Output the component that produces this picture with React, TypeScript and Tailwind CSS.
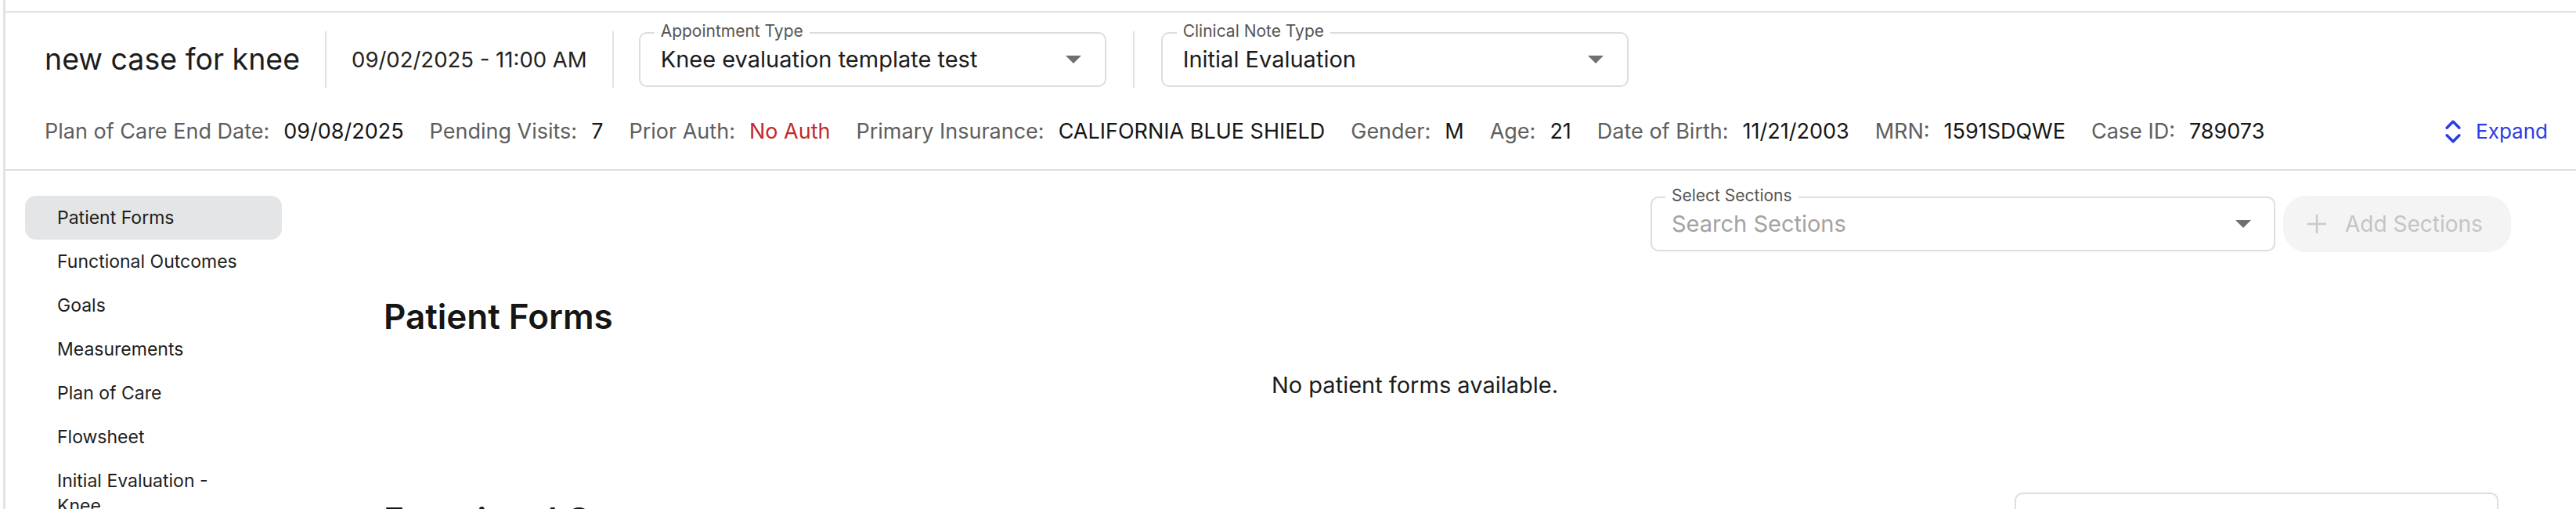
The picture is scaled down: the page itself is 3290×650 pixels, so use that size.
import React from "react";
import { ChevronsUpDown, Plus } from "lucide-react";

function Triangle() {
  return (
    <svg width="20" height="10" viewBox="0 0 20 10" className="shrink-0">
      <path d="M0 0 L20 0 L10 10 Z" fill="#6f6f6f" />
    </svg>
  );
}

function Divider() {
  return <div className="w-[2px] h-[72px] bg-[#e2e2e2] shrink-0" />;
}

function Info({ label, value, red }: { label: string; value: string; red?: boolean }) {
  return (
    <div className="flex items-center whitespace-nowrap">
      <span className="text-[#5e5e5e]">{label}</span>
      <span className={red ? "ml-[18px] text-[#c62828]" : "ml-[18px] text-[#161616]"}>{value}</span>
    </div>
  );
}

const sections = [
  "Patient Forms",
  "Functional Outcomes",
  "Goals",
  "Measurements",
  "Plan of Care",
  "Flowsheet",
  "Initial Evaluation - Knee",
];

export default function App() {
  return (
    <div className="w-[3290px] h-[650px] overflow-hidden bg-white font-['Inter',sans-serif] text-[#1a1a1a]">
      <div className="ml-[4px] h-full border-l-[3px] border-[#e3e3e3] pt-[14px]">
        <div className="border-t-2 border-[#e0e0e0]">
          {/* Header */}
          <header className="border-b-2 border-[#e0e0e0] pt-[24px] pb-[30px] pl-[50px] pr-[36px]">
            <div className="flex items-center h-[72px] gap-[32px]">
              <div className="text-[37.5px] leading-[44px] text-[#1c1c1c] whitespace-nowrap">new case for knee</div>
              <Divider />
              <div className="text-[27.5px] leading-[32px] text-[#222] whitespace-nowrap">09/02/2025 - 11:00 AM</div>
              <Divider />
              <div className="relative h-[70px] w-[597px] rounded-[10px] border-2 border-[#dddddd] flex items-center pl-[26px] pr-[30px]">
                <span className="absolute -top-[15px] left-[18px] bg-white px-[8px] text-[21px] leading-[24px] text-[#555] whitespace-nowrap">
                  Appointment Type
                </span>
                <span className="flex-1 text-[29px] leading-[36px] text-[#1c1c1c] whitespace-nowrap">Knee evaluation template test</span>
                <Triangle />
              </div>
              <div className="ml-[2px] mr-[2px]">
                <Divider />
              </div>
              <div className="relative h-[70px] w-[597px] rounded-[10px] border-2 border-[#dddddd] flex items-center pl-[26px] pr-[30px]">
                <span className="absolute -top-[15px] left-[18px] bg-white px-[8px] text-[21px] leading-[24px] text-[#555] whitespace-nowrap">
                  Clinical Note Type
                </span>
                <span className="flex-1 text-[29px] leading-[36px] text-[#1c1c1c] whitespace-nowrap">Initial Evaluation</span>
                <Triangle />
              </div>
            </div>
            <div className="mt-[38px] h-[36px] flex items-center text-[27px] leading-[36px]">
              <div className="flex items-center gap-[33px]">
                <Info label="Plan of Care End Date:" value="09/08/2025" />
                <Info label="Pending Visits:" value="7" />
                <Info label="Prior Auth:" value="No Auth" red />
                <Info label="Primary Insurance:" value="CALIFORNIA BLUE SHIELD" />
                <Info label="Gender:" value="M" />
                <Info label="Age:" value="21" />
                <Info label="Date of Birth:" value="11/21/2003" />
                <Info label="MRN:" value="1591SDQWE" />
                <Info label="Case ID:" value="789073" />
              </div>
              <div className="ml-auto flex items-center gap-[10px] text-[#2b3be6] text-[26px]">
                <ChevronsUpDown size={38} strokeWidth={2.2} color="#2b3be6" />
                <span>Expand</span>
              </div>
            </div>
          </header>

          {/* Body */}
          <div className="flex">
            <nav className="pl-[25px] pt-[32px] shrink-0">
              <ul className="w-[328px]">
                {sections.map((s, i) => (
                  <li
                    key={s}
                    className={
                      i === 0
                        ? "rounded-[14px] bg-[#e3e5e6] pl-[41px] pr-[41px] py-[12px] text-[23px] leading-[32px] text-[#1e1e1e]"
                        : "rounded-[14px] pl-[41px] pr-[41px] py-[12px] text-[23px] leading-[32px] text-[#1e1e1e]"
                    }
                  >
                    {s}
                  </li>
                ))}
              </ul>
            </nav>

            <main className="ml-[130px] pt-[32px] flex-1 pr-[83px]">
              <div className="flex justify-end gap-[10px]">
                <div className="relative h-[70px] w-[798px] mt-[1px] rounded-[10px] border-2 border-[#dddddd] flex items-center pl-[25px] pr-[29px]">
                  <span className="absolute -top-[15px] left-[17px] bg-white px-[8px] text-[21px] leading-[24px] text-[#555] whitespace-nowrap">
                    Select Sections
                  </span>
                  <span className="flex-1 text-[29px] leading-[36px] text-[#a3a3a3] whitespace-nowrap">Search Sections</span>
                  <Triangle />
                </div>
                <div className="h-[72px] w-[291px] rounded-[30px] bg-[#f4f4f4] flex items-center pl-[24px] gap-[17px]">
                  <Plus size={38} strokeWidth={1.5} color="#c9c9c9" />
                  <span className="text-[28px] text-[#c4c4c4] whitespace-nowrap">Add Sections</span>
                </div>
              </div>

              <h2 className="mt-[56px] text-[44px] leading-[52px] font-semibold text-[#161616]">Patient Forms</h2>
              <div className="mt-[44px] w-[2634px] text-center text-[29px] leading-[36px] text-[#1c1c1c]">
                No patient forms available.
              </div>

              <div className="mt-[119px] w-[2701px] flex items-center justify-between">
                <h2 className="text-[44px] leading-[52px] font-semibold text-[#161616]">Functional Outcomes</h2>
                <div className="h-[70px] w-[618px] rounded-[10px] border-2 border-[#dddddd] flex items-center pl-[24px]">
                  <span className="text-[29px] leading-[36px] text-[#a3a3a3] whitespace-nowrap">Add functional outcome form</span>
                </div>
              </div>
            </main>
          </div>
        </div>
      </div>
    </div>
  );
}
